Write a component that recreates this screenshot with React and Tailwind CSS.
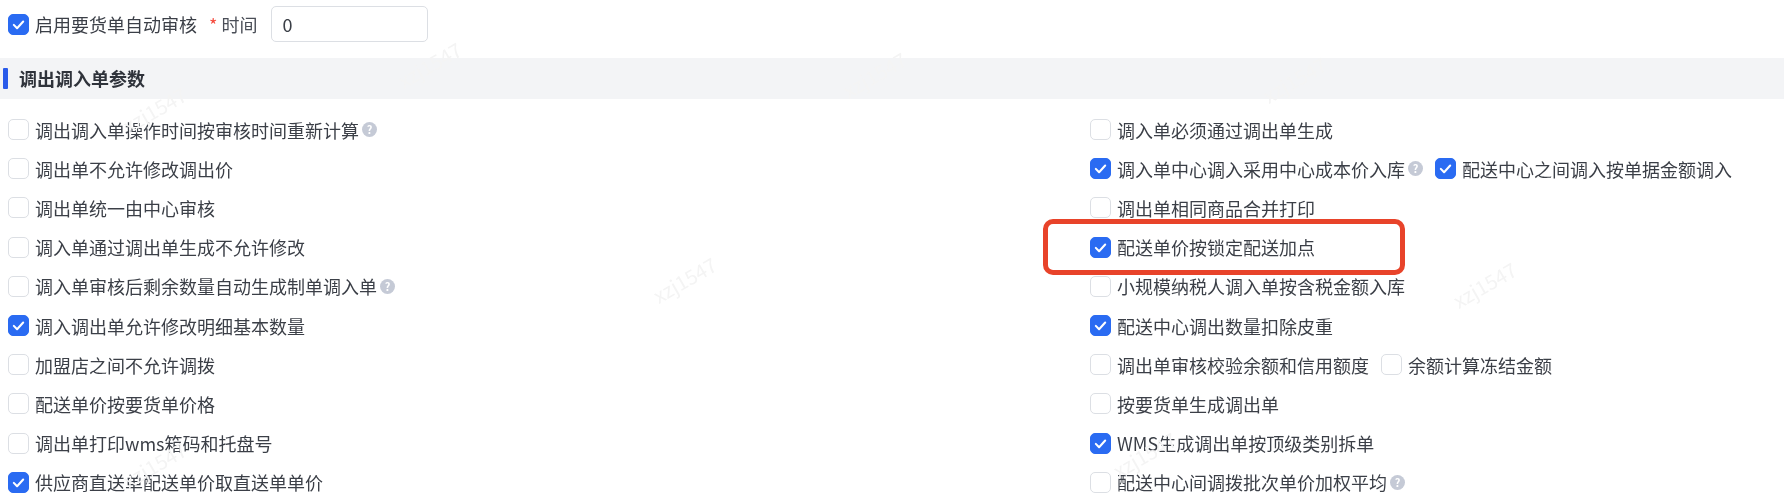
import React from "react";

const HelpDot = () => (
  <span className="ml-[3px] flex h-[15px] w-[15px] shrink-0 items-center justify-center rounded-full bg-[#c5cad6] text-[11px] leading-none font-bold text-white">
    ?
  </span>
);

const Check = ({ label, checked, help, className = "" }) => (
  <div className={`flex items-center ${className}`}>
    <span
      className={`flex h-[21px] w-[21px] shrink-0 items-center justify-center rounded-[5px] border ${
        checked ? "border-[#2a6bf2] bg-[#2a6bf2]" : "border-[#dcdfe4] bg-white"
      }`}
    >
      {checked && (
        <svg width="15" height="15" viewBox="0 0 16 16" fill="none">
          <path d="M3 8.4 6.5 12 13 4.8" stroke="white" strokeWidth="2.2" strokeLinecap="round" strokeLinejoin="round" />
        </svg>
      )}
    </span>
    <span className="ml-[6px] text-[18px] leading-none whitespace-nowrap text-[#3b3f47]">{label}</span>
    {help && <HelpDot />}
  </div>
);

const leftRows = [
  { label: "调出调入单操作时间按审核时间重新计算", help: true },
  { label: "调出单不允许修改调出价" },
  { label: "调出单统一由中心审核" },
  { label: "调入单通过调出单生成不允许修改" },
  { label: "调入单审核后剩余数量自动生成制单调入单", help: true },
  { label: "调入调出单允许修改明细基本数量", checked: true },
  { label: "加盟店之间不允许调拨" },
  { label: "配送单价按要货单价格" },
  { label: "调出单打印wms箱码和托盘号" },
  { label: "供应商直送单配送单价取直送单单价", checked: true },
];

const rightRows = [
  [{ label: "调入单必须通过调出单生成" }],
  [
    { label: "调入单中心调入采用中心成本价入库", checked: true, help: true },
    { label: "配送中心之间调入按单据金额调入", checked: true, className: "ml-[12px]" },
  ],
  [{ label: "调出单相同商品合并打印" }],
  [{ label: "配送单价按锁定配送加点", checked: true }],
  [{ label: "小规模纳税人调入单按含税金额入库" }],
  [{ label: "配送中心调出数量扣除皮重", checked: true }],
  [
    { label: "调出单审核校验余额和信用额度" },
    { label: "余额计算冻结金额", className: "ml-[12px]" },
  ],
  [{ label: "按要货单生成调出单" }],
  [{ label: "WMS生成调出单按顶级类别拆单", checked: true }],
  [{ label: "配送中心间调拨批次单价加权平均", help: true }],
];

const watermarks = [
  "left-[120px] top-[95px]",
  "left-[395px] top-[50px]",
  "left-[650px] top-[265px]",
  "left-[1260px] top-[65px]",
  "left-[1110px] top-[440px]",
  "left-[1450px] top-[270px]",
  "left-[120px] top-[450px]",
  "left-[840px] top-[60px]",
];

export default function App() {
  return (
    <div
      className="relative h-[493px] w-[1784px] overflow-hidden bg-white blur-[0.4px]"
      style={{ fontFamily: '"Noto Sans CJK SC", "Noto Sans", sans-serif' }}
    >
      <div className="flex h-[58px] items-start pt-[6px] pl-[8px]">
        <div className="flex h-[36px] items-center">
          <Check label="启用要货单自动审核" checked />
          <span className="ml-[12px] text-[18px] leading-none text-[#f5483b]">*</span>
          <span className="ml-[4px] text-[18px] leading-none text-[#4a4e57]">时间</span>
          <div className="ml-[14px] flex h-[36px] w-[157px] items-center rounded-[5px] border border-[#dcdfe4] pl-[10px] text-[18px] text-[#3b3f47]">
            0
          </div>
        </div>
      </div>

      <div className="flex h-[41px] items-center bg-[#f3f4f6] pl-[3px]">
        <span className="h-[21px] w-[5px] rounded-[1px] bg-[#2a5bea]" />
        <span className="ml-[11px] text-[18px] font-bold text-[#2f333b]">调出调入单参数</span>
      </div>

      <div className="grid grid-cols-[1082px_1fr] pt-[11px] pl-[8px]">
        <div className="flex flex-col">
          {leftRows.map((row) => (
            <Check key={row.label} {...row} className="h-[39.2px]" />
          ))}
        </div>
        <div className="flex flex-col">
          {rightRows.map((row) => (
            <div key={row[0].label} className="flex h-[39.2px] items-center">
              {row.map((item) => (
                <Check key={item.label} {...item} />
              ))}
            </div>
          ))}
        </div>
      </div>

      {/* red annotation box drawn over the form */}
      <div className="absolute top-[219px] left-[1043px] h-[56px] w-[362px] rounded-[10px] border-[5px] border-[#e8432a]" />

      {watermarks.map((pos) => (
        <span
          key={pos}
          className={`pointer-events-none absolute -rotate-[30deg] text-[20px] text-[#f4f4f4] ${pos}`}
        >
          xzj1547
        </span>
      ))}
    </div>
  );
}
